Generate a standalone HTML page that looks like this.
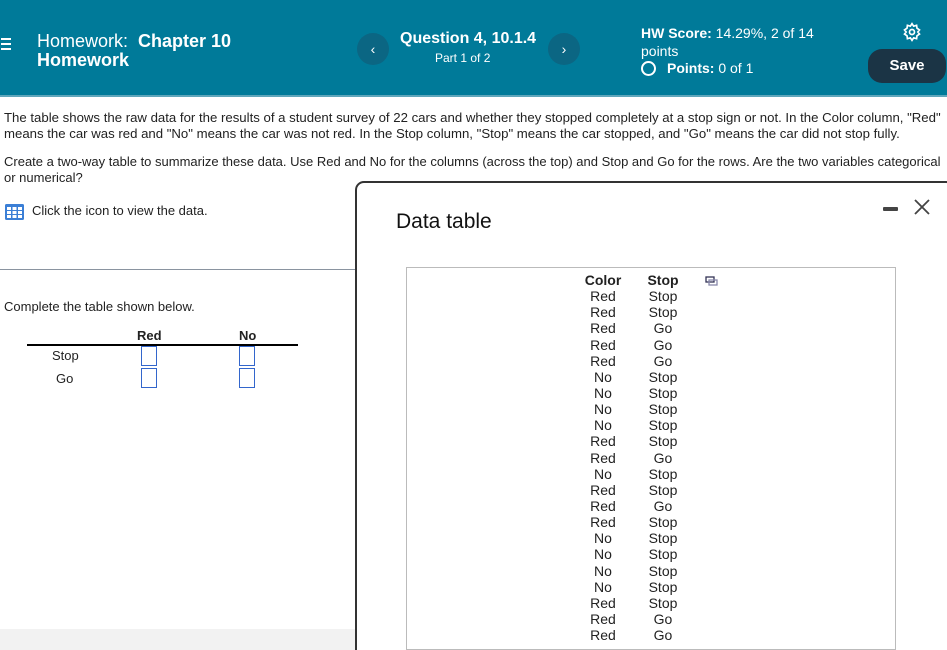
<!DOCTYPE html>
<html><head><style>
*{margin:0;padding:0;box-sizing:border-box}
html,body{width:947px;height:650px;overflow:hidden}
body{position:relative;font-family:"Liberation Sans",Arial,sans-serif;color:#222;background:#fff}
.hdr{position:absolute;left:0;top:0;width:947px;height:97px;background:#007a99;color:#fff;border-bottom:2px solid #5fa6bb}
.a{position:absolute}
.circ{position:absolute;width:32px;height:32px;border-radius:50%;background:#0b6683;color:#fff;font-size:14px;text-align:center;line-height:32px}
.t{position:absolute;font-size:13px;white-space:nowrap}
.box{position:absolute;width:16px;height:20px;border:1.5px solid #3366cc;background:#fff}
.dt{position:absolute;font-size:14px;width:60px;text-align:center;line-height:16.14px}
</style></head><body>
<div class="hdr">
 <div class="a" style="left:1px;top:38px;width:10px">
  <div style="height:2px;background:#fff;margin-bottom:3px"></div><div style="height:2px;background:#fff;margin-bottom:3px"></div><div style="height:2px;background:#fff"></div></div>
 <div class="a" style="left:37px;top:32px;font-size:18px;line-height:19px">Homework:&nbsp; <b>Chapter 10</b><br><b>Homework</b></div>
 <div class="circ" style="left:357px;top:33px">‹</div>
 <div class="a" style="left:400px;top:30px;font-size:16px;font-weight:bold">Question 4, 10.1.4</div>
 <div class="a" style="left:435px;top:51px;font-size:12px">Part 1 of 2</div>
 <div class="circ" style="left:548px;top:33px">›</div>
 <div class="a" style="left:641px;top:24px;font-size:14px;line-height:18px"><b>HW Score:</b> 14.29%, 2 of 14<br>points</div>
 <div class="a" style="left:641px;top:61px;width:15px;height:15px;border:2px solid #fff;border-radius:50%"></div>
 <div class="a" style="left:667px;top:60px;font-size:14px"><b>Points:</b> 0 of 1</div>
 <svg class="a" style="left:902px;top:22px" width="20" height="20" viewBox="0 0 24 24" fill="none" stroke="#fff" stroke-width="2"><circle cx="12" cy="12" r="3"/><path d="M12 2l2 3 3.5-1 .5 3.5 3 2-2 2.5 2 2.5-3 2-.5 3.5-3.5-1-2 3-2-3-3.5 1-.5-3.5-3-2 2-2.5-2-2.5 3-2 .5-3.5 3.5 1z"/></svg>
 <div class="a" style="left:868px;top:49px;width:78px;height:34px;border-radius:14px;background:#1b3445;font-size:15px;font-weight:bold;text-align:center;line-height:34px">Save</div>
</div>
<div class="t" style="left:4px;top:110px;line-height:16px;font-size:13.2px">The table shows the raw data for the results of a student survey of 22 cars and whether they stopped completely at a stop sign or not. In the Color column, "Red"<br>means the car was red and "No" means the car was not red. In the Stop column, "Stop" means the car stopped, and "Go" means the car did not stop fully.</div>
<div class="t" style="left:4px;top:154px;line-height:16px;font-size:13px">Create a two-way table to summarize these data. Use Red and No for the columns (across the top) and Stop and Go for the rows. Are the two variables categorical<br>or numerical?</div>
<svg class="a" style="left:5px;top:204px" width="19" height="16" viewBox="0 0 19 16"><rect x="0" y="0" width="19" height="16" rx="1.5" fill="#3b7fd6"/><g fill="#fff"><rect x="2" y="3" width="4" height="3"/><rect x="7.5" y="3" width="4" height="3"/><rect x="13" y="3" width="4" height="3"/><rect x="2" y="7" width="4" height="3"/><rect x="7.5" y="7" width="4" height="3"/><rect x="13" y="7" width="4" height="3"/><rect x="2" y="11" width="4" height="3"/><rect x="7.5" y="11" width="4" height="3"/><rect x="13" y="11" width="4" height="3"/></g></svg>
<div class="t" style="left:32px;top:203px">Click the icon to view the data.</div>
<div class="a" style="left:0;top:269px;width:356px;height:1px;background:#8a94a0"></div>
<div class="t" style="left:4px;top:299px">Complete the table shown below.</div>
<div class="t" style="left:137px;top:328px;font-weight:bold">Red</div>
<div class="t" style="left:239px;top:328px;font-weight:bold">No</div>
<div class="a" style="left:27px;top:344px;width:271px;height:1.5px;background:#000"></div>
<div class="t" style="left:52px;top:348px">Stop</div>
<div class="t" style="left:56px;top:371px">Go</div>
<div class="box" style="left:141px;top:346px"></div><div class="box" style="left:239px;top:346px"></div>
<div class="box" style="left:141px;top:368px"></div><div class="box" style="left:239px;top:368px"></div>
<div class="a" style="left:0;top:629px;width:356px;height:21px;background:#f2f2f2"></div>
<div class="a" style="left:355px;top:181px;width:600px;height:500px;border:2px solid #333;border-radius:9px;background:#fff"></div>
<div class="a" style="left:396px;top:210px;font-size:21px;color:#111">Data table</div>
<div class="a" style="left:883px;top:207px;width:15px;height:4px;background:#444;border-radius:1px"></div>
<svg class="a" style="left:914px;top:199px" width="16" height="16" viewBox="0 0 16 16" stroke="#444" stroke-width="1.8"><path d="M1 1L15 15M15 1L1 15"/></svg>
<div class="a" style="left:406px;top:267px;width:490px;height:383px;border:1px solid #bbb"></div>
<svg class="a" style="left:705px;top:276px" width="13" height="11" viewBox="0 0 13 11" fill="none" stroke="#335" stroke-width="1.3"><rect x="1" y="1" width="8" height="5"/><rect x="4" y="4" width="8" height="5" stroke="#88a"/></svg>
<div class="dt" style="left:573px;top:272px">
<b>Color</b><br>Red<br>Red<br>Red<br>Red<br>Red<br>No<br>No<br>No<br>No<br>Red<br>Red<br>No<br>Red<br>Red<br>Red<br>No<br>No<br>No<br>No<br>Red<br>Red<br>Red</div>
<div class="dt" style="left:633px;top:272px">
<b>Stop</b><br>Stop<br>Stop<br>Go<br>Go<br>Go<br>Stop<br>Stop<br>Stop<br>Stop<br>Stop<br>Go<br>Stop<br>Stop<br>Go<br>Stop<br>Stop<br>Stop<br>Stop<br>Stop<br>Stop<br>Go<br>Go</div>
</body></html>
